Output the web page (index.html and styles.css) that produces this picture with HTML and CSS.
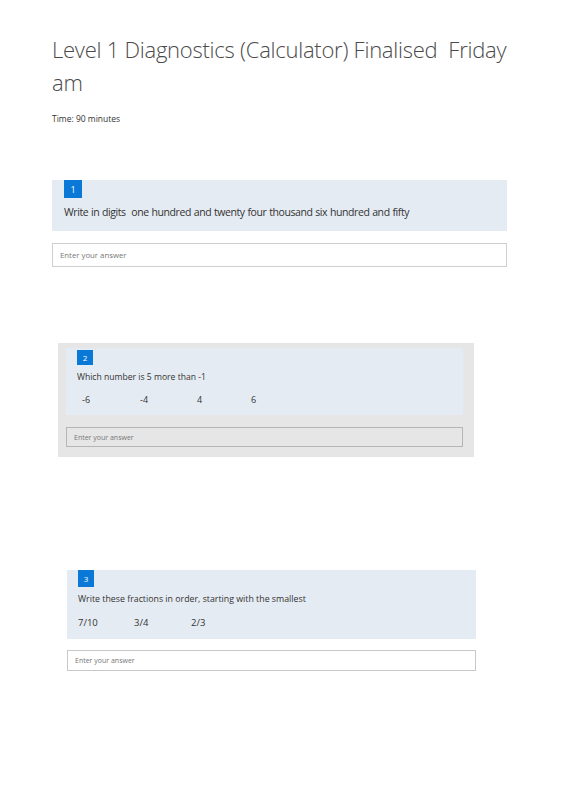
FILE: index.html
```html
<!DOCTYPE html>
<html>
<head>
<meta charset="utf-8">
<link rel="stylesheet" href="styles.css">
</head>
<body>
<div class="page">
  <h1 class="title">Level 1 Diagnostics (Calculator) Finalised&nbsp; Friday am</h1>
  <p class="time">Time: 90 minutes</p>

  <section class="q1">
    <div class="qbox q1-box">
      <span class="badge b1">1</span>
      <p class="qtext q1-text">Write in digits&nbsp; one hundred and twenty four thousand six hundred and fifty</p>
    </div>
    <div class="answer a1">Enter your answer</div>
  </section>

  <section class="q2">
    <div class="qbox q2-box">
      <span class="badge b2">2</span>
      <p class="qtext q2-text">Which number is 5 more than -1</p>
      <div class="opts opts2">
        <span>-6</span><span>-4</span><span>4</span><span>6</span>
      </div>
    </div>
    <div class="answer a2">Enter your answer</div>
  </section>

  <section class="q3">
    <div class="qbox q3-box">
      <span class="badge b3">3</span>
      <p class="qtext q3-text">Write these fractions in order, starting with the smallest</p>
      <div class="opts opts3">
        <span>7/10</span><span>3/4</span><span>2/3</span>
      </div>
    </div>
    <div class="answer a3">Enter your answer</div>
  </section>
</div>
</body>
</html>
```

FILE: styles.css
```css
* { box-sizing: border-box; }
html, body { margin: 0; padding: 0; background: #fff; }
body { font-family: "Open Sans", "Noto Sans", sans-serif; color: #333; }
.page { padding: 33px 0 0 52px; width: 565px; }

.title {
  margin: 0;
  width: 470px;
  font-size: 22px;
  font-weight: 300;
  line-height: 33px;
  color: #4a4a4a;
  letter-spacing: -0.25px;
}
.time {
  margin: 14px 0 0;
  font-size: 8.5px;
  line-height: 12px;
  color: #333;
}

.qbox { background: #e5ebf2; }
.badge {
  display: flex;
  align-items: center;
  justify-content: center;
  background: #0a78d6;
  color: #fff;
  font-size: 9px;
}
.qtext { margin: 0; color: #333; }
.answer {
  border: 1px solid #cfcfcf;
  background: #fff;
  color: #777;
  display: flex;
  align-items: center;
}

/* Q1 */
.q1 { margin-top: 55px; width: 455px; }
.q1-box { padding: 0 12px 0; height: 51px; }
.b1 { width: 18px; height: 18px; }
.q1-text { font-size: 10.5px; line-height: 14px; margin-top: 7px; letter-spacing: -0.42px; word-spacing: 0.5px; }
.a1 { margin-top: 12px; height: 24px; padding-left: 7px; font-size: 7.8px; }

/* Q2 */
.q2 {
  margin: 76px 0 0 6px;
  width: 416px;
  background: #e6e6e6;
  padding: 5px 11px 10px 8px;
}
.q2-box { padding: 2px 11px 0; height: 67px; }
.b2 { width: 16px; height: 15px; font-size: 8px; }
.q2-text { font-size: 8.6px; line-height: 12px; margin-top: 6px; }
.opts { display: flex; }
.opts2 { margin-top: 11px; padding-left: 5px; font-size: 9px; line-height: 12px; }
.opts2 span:nth-child(1) { width: 58px; }
.opts2 span:nth-child(2) { width: 57px; }
.opts2 span:nth-child(3) { width: 54px; }
.a2 {
  margin-top: 12px;
  height: 20px;
  background: #e6e6e6;
  border-color: #b5b5b5;
  padding-left: 7px;
  font-size: 7px;
  color: #777;
}

/* Q3 */
.q3 { margin: 113px 0 0 15px; width: 409px; }
.q3-box { padding: 0 11px 0; height: 69px; }
.b3 { width: 16px; height: 17px; font-size: 8px; }
.q3-text { font-size: 8.8px; line-height: 12px; margin-top: 6px; }
.opts3 { margin-top: 12px; font-size: 9.5px; line-height: 12px; }
.opts3 span:nth-child(1) { width: 56px; }
.opts3 span:nth-child(2) { width: 57px; }
.a3 { margin-top: 11px; height: 21px; padding-left: 7px; font-size: 7px; color: #777; border-color: #c8c8c8; }
```
